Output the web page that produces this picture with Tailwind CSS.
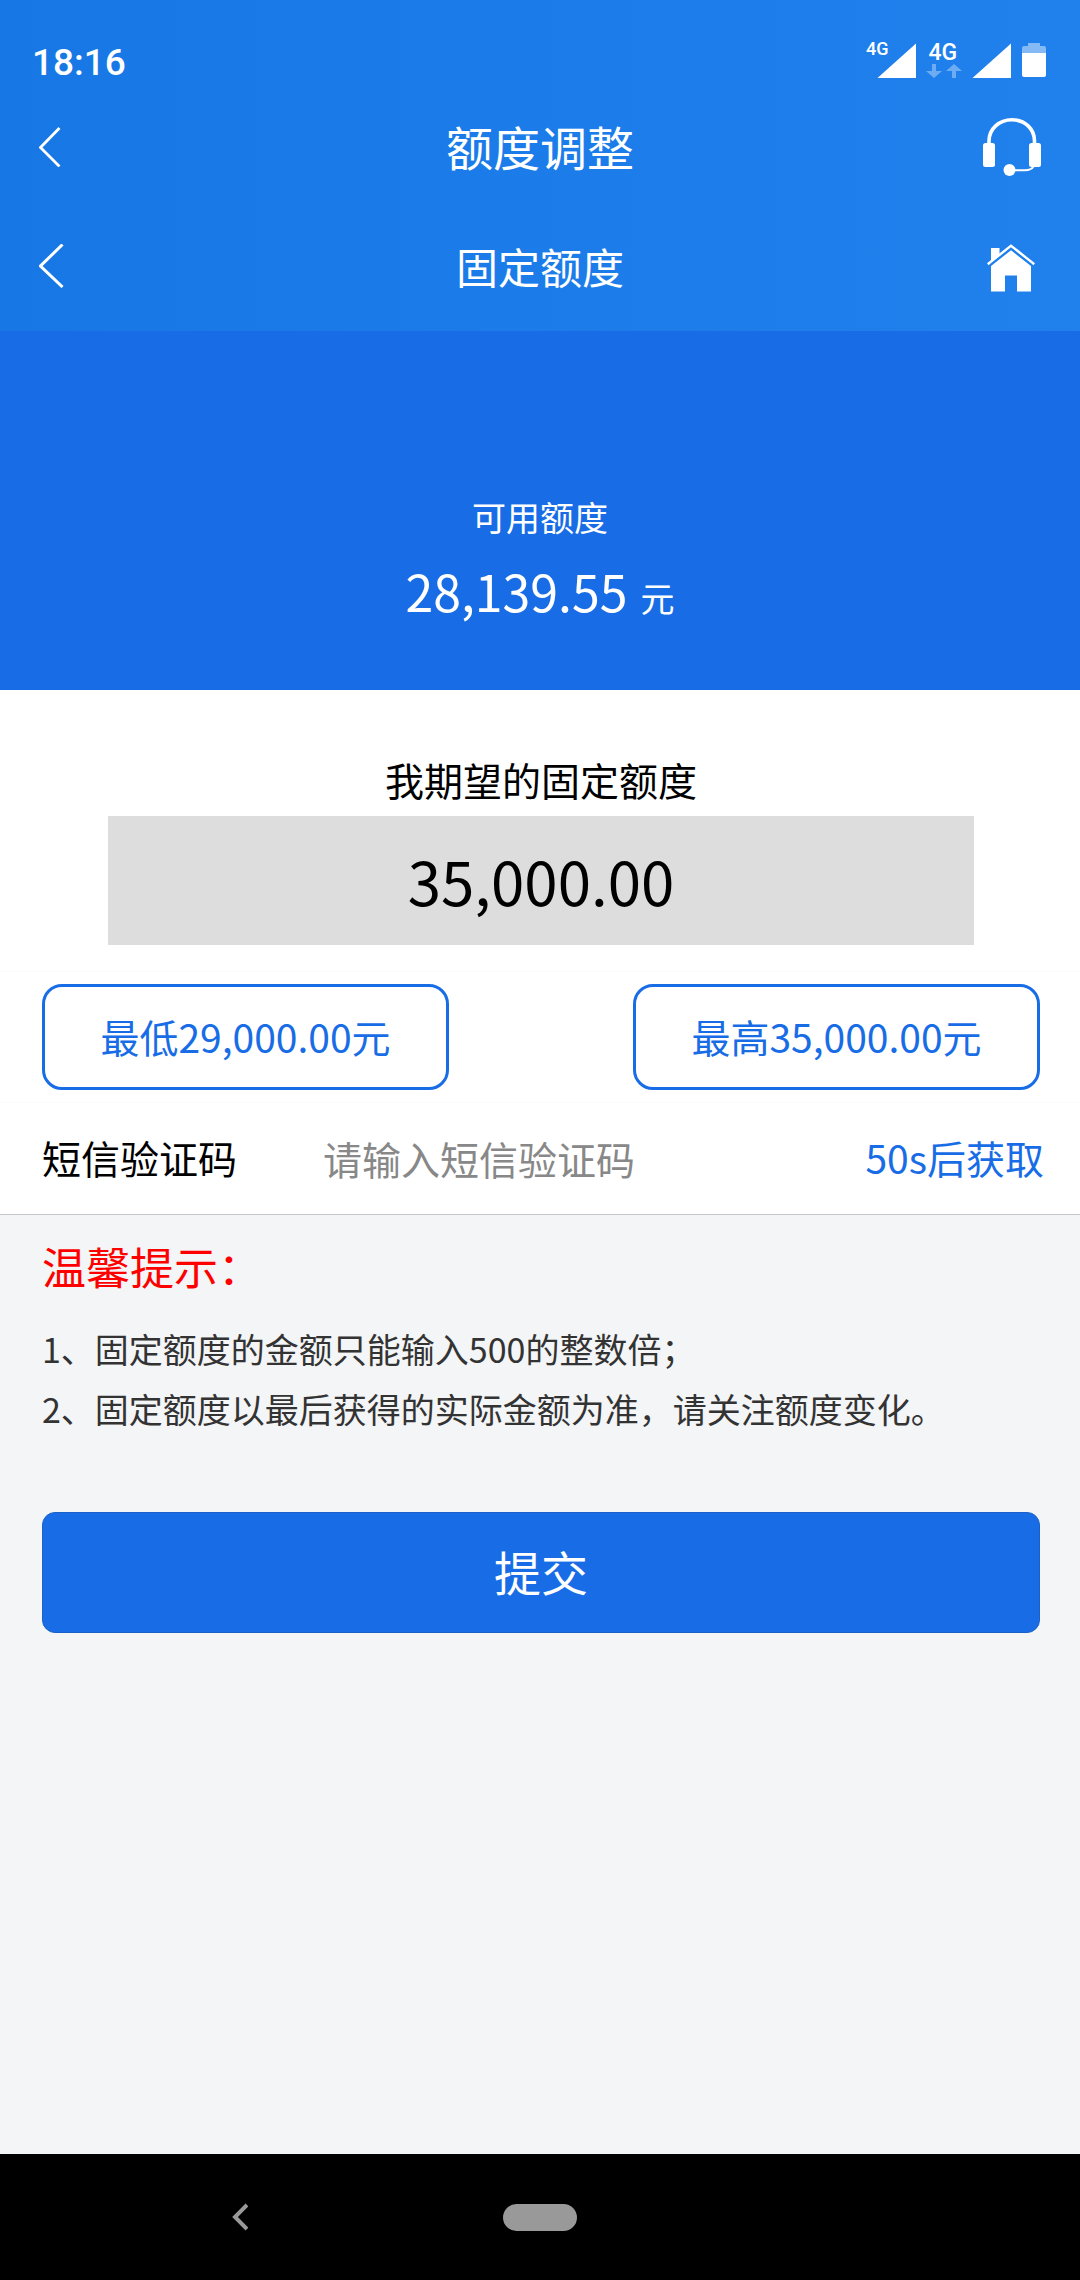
<!DOCTYPE html>
<html lang="zh-CN">
<head>
<meta charset="utf-8">
<meta name="viewport" content="width=device-width, initial-scale=1">
<title>固定额度</title>
<script src="https://cdn.jsdelivr.net/npm/@tailwindcss/browser@4"></script>
</head>
<body class="flex min-h-screen flex-col bg-[#f3f5f7] font-['Noto_Sans_CJK_SC',sans-serif] text-black">

<header class="bg-linear-to-r from-[#1777e5] to-[#2081ed] text-white">
  <!-- System status bar -->
  <div class="flex h-24 items-center justify-between pt-7 pr-[34px] pl-8 font-[Roboto,sans-serif]">
    <time class="text-[37px] leading-none font-medium">18:16</time>
    <div class="grid h-10 w-[180px]" role="img" aria-label="信号与电量">
      <svg class="col-start-1 row-start-1 h-10 w-[180px]" viewBox="0 0 180 40" fill="currentColor">
        <path d="M50 1.500V36H11.500z"/>
        <path opacity=".35" d="M66 22h4v7h6l-8 7-8-7h6zM86 36h4v-7h6l-8-7-8 7h6z"/>
        <path d="M145 1.500V36h-38.500z"/>
        <path opacity=".45" d="M162 1h12v3h4q2 0 2 2v5h-24V6q0-2 2-2h4z"/>
        <path d="M156 11h24v22q0 2-2 2h-20q-2 0-2-2z"/>
      </svg>
      <div class="col-start-1 row-start-1 flex items-start gap-10 font-medium">
        <span class="text-[18px] leading-[14px]">4G</span>
        <span class="text-[23px] leading-[22px]">4G</span>
      </div>
    </div>
  </div>

  <nav class="grid h-[98px] grid-cols-[1fr_auto_1fr] items-center px-[39px] pt-1">
    <button type="button" aria-label="返回" class="justify-self-start">
      <svg class="h-10 w-6" viewBox="0 0 24 40" fill="none" stroke="currentColor" stroke-width="2.800"><path d="M20.500 1 1.500 20.500l19 19"/></svg>
    </button>
    <h1 class="pb-1 text-[47px] leading-none">额度调整</h1>
    <button type="button" aria-label="客服" class="justify-self-end">
      <svg class="size-[58px]" viewBox="0 0 58 58" fill="currentColor">
        <path d="M6 27v-4C6 11 16 1.800 29 1.800S51.500 11 51.500 23v4" fill="none" stroke="currentColor" stroke-width="3.600"/>
        <rect x="0" y="25" width="12" height="24" rx="2.500"/>
        <rect x="46" y="25" width="12" height="24" rx="2.500"/>
        <path d="M51 48c-2 3-5 4.300-9 4.300H27" fill="none" stroke="currentColor" stroke-width="2"/>
        <circle cx="26.500" cy="52" r="6"/>
      </svg>
    </button>
  </nav>

  <nav class="grid h-[137px] grid-cols-[1fr_auto_1fr] items-center px-[39px] pt-1.5">
    <button type="button" aria-label="返回" class="justify-self-start">
      <svg class="h-11 w-[26px]" viewBox="0 0 26 44" fill="none" stroke="currentColor" stroke-width="3"><path d="M23.500 .5 1.500 22l22 21"/></svg>
    </button>
    <h2 class="text-[42px] leading-none">固定额度</h2>
    <a href="#" aria-label="首页" class="justify-self-end pt-1 pr-1.5">
      <svg class="h-12 w-12" viewBox="0 0 48 48" fill="currentColor">
        <path d="M4 4h8.500v6.500L4 17.500z"/>
        <path d="M.8 20.300 24 1.800l23.200 18.500" fill="none" stroke="currentColor" stroke-width="2.600"/>
        <path d="M24 6.200 44 22v25.500H30V31.500H18v16H4V22z"/>
        <path d="M3 21.200 24 4.600l21 16.600" fill="none" stroke="#1f80ec" stroke-width="1.600"/>
      </svg>
    </a>
  </nav>
</header>

<main class="flex-1">
  <section class="flex h-[359px] flex-col items-center bg-[#186de6] pt-[168px] text-white">
    <p class="text-[34px] leading-9">可用额度</p>
    <p class="mt-[25px] flex items-baseline gap-[13px] text-[50px] leading-[60px]">28,139.55<span class="text-[34px]">元</span></p>
  </section>

  <form>
    <div class="bg-white">
      <div class="pt-[66px] pr-[106px] pb-[26px] pl-[108px]">
        <label for="amount" class="block text-center text-[39px] leading-[46px]">我期望的固定额度</label>
        <input id="amount" type="text" value="35,000.00" class="mt-[14px] block h-[129px] w-full bg-[#ddd] pb-0.5 text-center text-[60px] leading-none">
      </div>
      <div class="flex justify-between border-y border-[#fcfcfc] py-3 pr-10 pl-[42px] text-[39px] text-[#186de6]">
        <button type="button" class="h-[106px] w-[407px] rounded-[20px] border-[3px] border-[#186de6] pb-0.5">最低29,000.00元</button>
        <button type="button" class="h-[106px] w-[407px] rounded-[20px] border-[3px] border-[#186de6] pb-0.5">最高35,000.00元</button>
      </div>
      <div class="flex h-[112px] items-center border-b border-[#c4c6c8] pr-9 pb-0.5 pl-[42px] text-[39px] leading-none">
        <label for="code" class="w-[281px]">短信验证码</label>
        <input id="code" type="text" placeholder="请输入短信验证码" class="h-16 min-w-0 flex-1 placeholder:text-[#888]">
        <button type="button" class="text-[#186de6]">50s后获取</button>
      </div>
    </div>

    <section class="pt-[26px] pr-10 pl-[42px]">
      <h3 class="text-[44px] leading-[50px] text-[#f00]">温馨提示：</h3>
      <ol class="mt-7 text-[34px] leading-[60px] text-[#333]">
        <li>1、固定额度的金额只能输入500的整数倍；</li>
        <li>2、固定额度以最后获得的实际金额为准，请关注额度变化。</li>
      </ol>
      <button type="submit" class="mt-[73px] h-[121px] w-full rounded-[13px] border border-[#1a60c8] bg-[#186de6] pb-0.5 text-[47px] text-white">提交</button>
    </section>
  </form>
</main>

<!-- System navigation bar -->
<footer class="grid h-[126px] grid-cols-[1fr_auto_1fr] items-center bg-black text-[#999]">
  <button type="button" aria-label="返回" class="ml-[232px] justify-self-start">
    <svg class="h-7 w-4" viewBox="0 0 16 28" fill="none" stroke="currentColor" stroke-width="4"><path d="M15 2 3 14l12 12"/></svg>
  </button>
  <button type="button" aria-label="主屏幕" class="h-[27px] w-[74px] rounded-full bg-[#999]"></button>
</footer>

</body>
</html>
